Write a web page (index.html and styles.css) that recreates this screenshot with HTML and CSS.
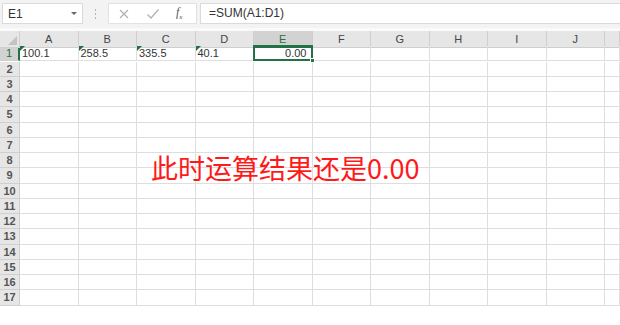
FILE: index.html
```html
<!DOCTYPE html>
<html>
<head>
<meta charset="utf-8">
<link rel="stylesheet" href="styles.css">
</head>
<body>
<div class="app">
  <div class="toolbar">
    <div class="namebox"><span>E1</span><span class="caret"></span></div>
    <div class="dots"><i></i><i></i><i></i></div>
    <div class="iconbox">
      <svg class="ic" width="12" height="12" viewBox="0 0 12 12"><path d="M2 2L10 10M10 2L2 10" stroke="#b0b0b0" stroke-width="1.2" fill="none"/></svg>
      <svg class="ic" width="14" height="12" viewBox="0 0 14 12"><path d="M1.5 6.5L5 10L12.5 1.5" stroke="#b0b0b0" stroke-width="1.2" fill="none"/></svg>
      <span class="fx">f<sub>x</sub></span>
    </div>
    <div class="formula">=SUM(A1:D1)</div>
  </div>
  <div class="gap"></div>
  <div class="sheet">
    <div class="grid">
      <div class="corner"><span class="tri"></span></div>
      <div class="ch">A</div><div class="ch">B</div><div class="ch">C</div><div class="ch">D</div><div class="ch active">E</div><div class="ch">F</div><div class="ch">G</div><div class="ch">H</div><div class="ch">I</div><div class="ch">J</div><div class="ch"></div>

      <div class="rh active first">1</div>
      <div class="c first txt">100.1</div><div class="c first txt">258.5</div><div class="c first txt">335.5</div><div class="c first txt">40.1</div><div class="c first num sel">0.00</div><div class="c first"></div><div class="c first"></div><div class="c first"></div><div class="c first"></div><div class="c first"></div><div class="c first"></div>
    </div>
    <div class="grid rows" id="rows"></div>
    <div class="note">此时运算结果还是0.00</div>
  </div>
</div>
<script>
  var r = document.getElementById('rows');
  var html = '';
  for (var i = 2; i <= 17; i++) {
    html += '<div class="rh">' + i + '</div>';
    for (var j = 0; j < 11; j++) html += '<div class="c"></div>';
  }
  r.innerHTML = html;
</script>
</body>
</html>
```

FILE: styles.css
```css
html, body {
  margin: 0;
  padding: 0;
  background: #ffffff;
}
body {
  width: 620px;
  height: 325px;
  overflow: hidden;
  font-family: "Liberation Sans", Arial, sans-serif;
}
.app {
  display: flex;
  flex-direction: column;
}
.toolbar {
  height: 28px;
  background: #f3f3f3;
  display: flex;
  align-items: flex-start;
  padding-top: 3px;
  box-sizing: border-box;
  padding-left: 2px;
}
.namebox {
  width: 81px;
  height: 21px;
  box-sizing: border-box;
  background: #fff;
  border: 1px solid #dadada;
  display: flex;
  align-items: center;
  justify-content: space-between;
  padding: 0 4px 0 5px;
  font-size: 12px;
  color: #333;
}
.caret {
  width: 0;
  height: 0;
  border-left: 3px solid transparent;
  border-right: 3px solid transparent;
  border-top: 3px solid #666;
  margin-right: 1px;
}
.dots {
  width: 25px;
  height: 21px;
  display: flex;
  flex-direction: column;
  align-items: center;
  justify-content: center;
  gap: 2px;
}
.dots i {
  width: 1px;
  height: 2px;
  background: #b5b5b5;
}
.iconbox {
  width: 89px;
  height: 21px;
  box-sizing: border-box;
  background: #fff;
  border: 1px solid #e2e2e2;
  display: flex;
  align-items: center;
  padding-left: 9px;
  gap: 16px;
}
.fx {
  font-family: "Liberation Serif", serif;
  font-style: italic;
  font-size: 12px;
  color: #555;
  line-height: 1;
}
.fx sub {
  font-size: 7px;
}
.formula {
  flex: 1;
  height: 21px;
  margin-left: 3px;
  box-sizing: border-box;
  background: #fff;
  border: 1px solid #dadada;
  border-right: none;
  font-size: 12px;
  color: #333;
  line-height: 19px;
  padding-left: 8px;
}
.gap {
  height: 3px;
  background: #fafafa;
}
.sheet {
  position: relative;
  height: 294px;
}
.grid {
  display: grid;
  grid-template-columns: 20px repeat(10, 58.5px) 1fr;
  grid-auto-rows: 15.25px;
}
.grid > div {
  box-sizing: border-box;
  border-right: 1px solid #dedede;
  border-bottom: 1px solid #dedede;
}
.corner, .ch {
  height: 17px;
  background: #e6e6e6;
  border-color: #cfcfcf !important;
}
.corner {
  position: relative;
}
.tri {
  position: absolute;
  right: 2px;
  bottom: 2px;
  width: 0;
  height: 0;
  border-left: 9px solid transparent;
  border-bottom: 9px solid #c2c2c2;
}
.ch {
  font-size: 11px;
  color: #444;
  text-align: center;
  line-height: 16px;
}
.ch.active {
  background: #d2d2d2;
  color: #217346;
  border-bottom: 2px solid #217346 !important;
}
.rh {
  background: #e6e6e6;
  border-color: #cfcfcf !important;
  font-size: 11px;
  font-weight: bold;
  color: #555;
  text-align: center;
  line-height: 15px;
}
.rh.active {
  background: #d2d2d2;
  color: #217346;
  font-weight: normal;
  border-right: 2px solid #217346 !important;
}
.first {
  height: 15px;
}
.c {
  position: relative;
  font-size: 11px;
  color: #333;
  line-height: 15px;
  padding-left: 2px;
  white-space: nowrap;
}
.c.txt::before {
  content: "";
  position: absolute;
  left: 0;
  top: 0;
  width: 0;
  height: 0;
  border-top: 5px solid #1e7145;
  border-right: 5px solid transparent;
}
.c.num {
  text-align: right;
  padding-right: 5px;
}
.c.sel::after {
  content: "";
  position: absolute;
  left: -1px;
  top: -1px;
  right: -1px;
  bottom: -1px;
  border: 2px solid #217346;
}
.c.sel::before {
  content: "";
  position: absolute;
  right: -3px;
  bottom: -3px;
  width: 5px;
  height: 5px;
  background: #217346;
  border: 1px solid #fff;
  box-sizing: border-box;
  z-index: 2;
}
.note {
  position: absolute;
  left: 151px;
  top: 123px;
  font-family: "Noto Sans CJK SC", "Noto Sans", sans-serif;
  font-size: 27px;
  color: #ff1a1a;
  line-height: 1;
  white-space: nowrap;
}
```
